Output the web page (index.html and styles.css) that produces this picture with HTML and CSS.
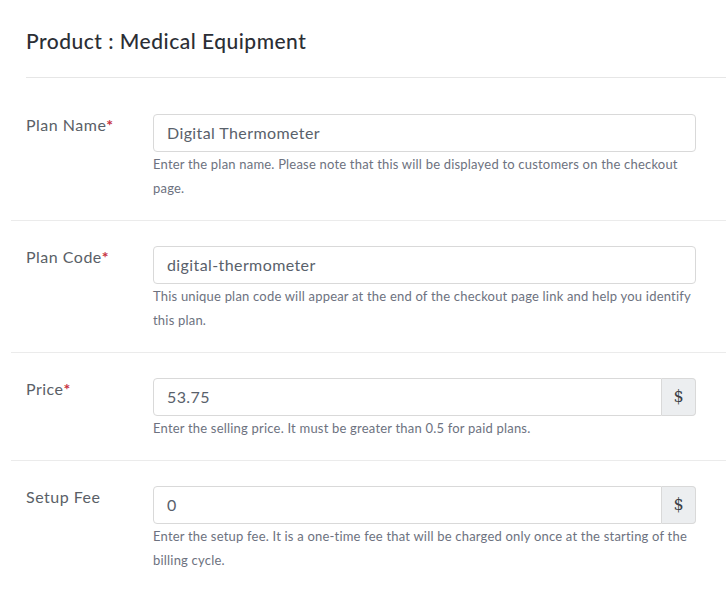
FILE: index.html
```html
<!DOCTYPE html>
<html>
<head>
<meta charset="utf-8">
<link rel="stylesheet" href="styles.css">
</head>
<body>
<div class="page">
  <div class="header">
    <h1 class="title">Product : Medical Equipment</h1>
  </div>
  <div class="rows">
    <div class="row row-first">
      <div class="label">Plan Name<span class="req">*</span></div>
      <div class="field">
        <div class="input">Digital Thermometer</div>
        <div class="help">Enter the plan name. Please note that this will be displayed to customers on the checkout page.</div>
      </div>
    </div>
    <div class="row">
      <div class="label">Plan Code<span class="req">*</span></div>
      <div class="field">
        <div class="input">digital-thermometer</div>
        <div class="help">This unique plan code will appear at the end of the checkout page link and help you identify this plan.</div>
      </div>
    </div>
    <div class="row">
      <div class="label">Price<span class="req">*</span></div>
      <div class="field">
        <div class="group">
          <div class="input input-grouped">53.75</div>
          <div class="addon">$</div>
        </div>
        <div class="help">Enter the selling price. It must be greater than 0.5 for paid plans.</div>
      </div>
    </div>
    <div class="row row-last">
      <div class="label">Setup Fee</div>
      <div class="field">
        <div class="group">
          <div class="input input-grouped">0</div>
          <div class="addon">$</div>
        </div>
        <div class="help">Enter the setup fee. It is a one-time fee that will be charged only once at the starting of the billing cycle.</div>
      </div>
    </div>
  </div>
</div>
</body>
</html>
```
FILE: styles.css
```css
html, body {
  margin: 0;
  padding: 0;
  background: #ffffff;
}
body {
  font-family: Lato, "Open Sans", sans-serif;
  width: 726px;
  height: 590px;
  overflow: hidden;
}
.page {
  padding-left: 11px;
}
.header {
  margin-left: 15px;
  border-bottom: 1px solid #e6e6e6;
  height: 78px;
  box-sizing: border-box;
  padding-top: 28px;
}
.title {
  margin: 0;
  font-size: 21px;
  font-weight: 500;
  letter-spacing: 0.5px;
  color: #2b2e35;
  line-height: 26px;
}
.rows {
  display: flex;
  flex-direction: column;
}
.row {
  display: flex;
  padding: 25px 30px 20px 15px;
  border-bottom: 1px solid #ebebeb;
}
.row-first {
  padding-top: 36px;
}
.row-last {
  border-bottom: none;
}
.label {
  width: 127px;
  flex: none;
  font-size: 16px;
  letter-spacing: 0.5px;
  color: #5a5f67;
  padding-top: 2px;
  line-height: 18px;
}
.req {
  color: #c7323f;
  font-weight: 700;
}
.field {
  flex: 1;
  min-width: 0;
}
.input {
  height: 38px;
  box-sizing: border-box;
  border: 1px solid #d9d9d9;
  border-radius: 4px;
  padding: 0 13px;
  font-size: 16px;
  letter-spacing: 0.4px;
  line-height: 35px;
  color: #59616b;
}
.group {
  display: flex;
}
.input-grouped {
  flex: 1;
  border-radius: 4px 0 0 4px;
}
.addon {
  width: 34px;
  height: 38px;
  box-sizing: border-box;
  border: 1px solid #d9d9d9;
  border-left: none;
  border-radius: 0 4px 4px 0;
  background: #eceef0;
  text-align: center;
  line-height: 36px;
  font-size: 16px;
  color: #3b3f46;
  font-family: "DejaVu Serif", serif;
}
.help {
  font-size: 13px;
  letter-spacing: 0.2px;
  line-height: 24px;
  color: #6d7280;
  padding-right: 4px;
}
```
